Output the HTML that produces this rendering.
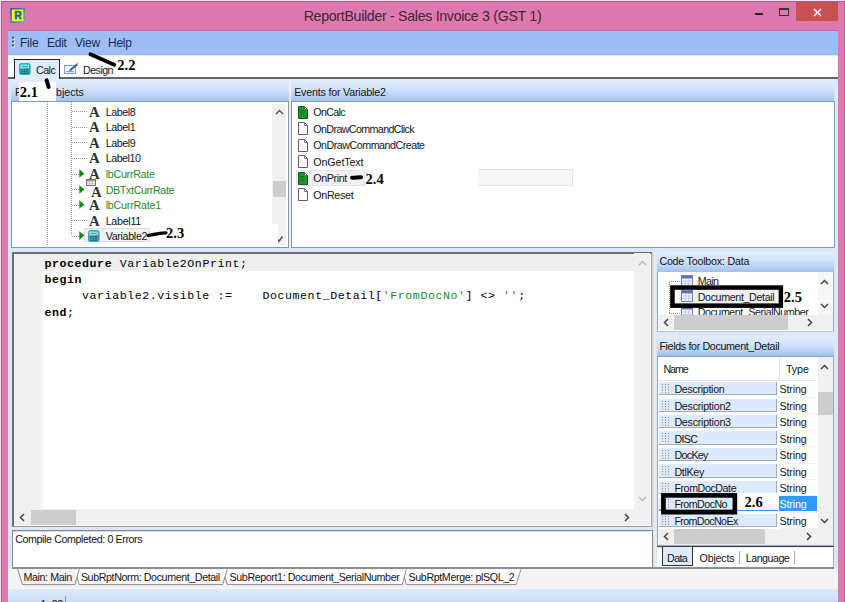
<!DOCTYPE html>
<html><head><meta charset="utf-8">
<style>
html,body{margin:0;padding:0;}
body{width:845px;height:602px;overflow:hidden;position:relative;background:#dd79ad;font-family:"Liberation Sans",sans-serif;font-size:10.7px;letter-spacing:-0.25px;color:#151515;}
.a{position:absolute;}
.t{position:absolute;white-space:nowrap;line-height:14px;}
.hdr{position:absolute;background:linear-gradient(#e2edfd 0%,#d0e1f9 45%,#b6cff3 78%,#a0bfee 100%);}
.code{font-family:"Liberation Mono",monospace;font-size:11.6px;letter-spacing:0.56px;white-space:pre;line-height:16.35px;color:#000;}.code b{font-weight:bold}
.g{color:#1d8a2b;}
.ann{font-family:"Liberation Serif",serif;font-weight:bold;font-size:14.5px;letter-spacing:0;color:#000;position:absolute;line-height:16px;white-space:nowrap;}
.sb{position:absolute;background:#f0f0f0;}
.th{position:absolute;background:#cdcdcd;}
.arr{position:absolute;}
.dv{position:absolute;width:1px;background:repeating-linear-gradient(#9c9c9c 0 1px,transparent 1px 2px);}
.dh{position:absolute;height:1px;background:repeating-linear-gradient(90deg,#9c9c9c 0 1px,transparent 1px 2px);}
.A{position:absolute;font-family:"Liberation Serif",serif;font-weight:bold;font-size:14.8px;letter-spacing:0;line-height:14px;color:#333;}
</style></head><body>
<!-- outer strips -->
<div class="a" style="left:0;top:0;width:845px;height:1.2px;background:#ece9ea"></div>
<div class="a" style="left:0;top:0;width:1.2px;height:602px;background:#e6e6e8"></div>
<div class="a" style="left:1.2px;top:1.2px;width:844px;height:1px;background:#b9588c"></div>
<div class="a" style="left:1.2px;top:1.2px;width:1px;height:601px;background:#b9588c"></div>

<div class="a" style="left:844px;top:1px;width:1px;height:601px;background:#b0608f"></div>
<!-- title bar -->
<svg class="a" style="left:10px;top:8px" width="16" height="16"><defs><linearGradient id="ig" x1="0" y1="0" x2="1" y2="1"><stop offset="0" stop-color="#34589f"/><stop offset="1" stop-color="#74a6d6"/></linearGradient></defs><rect x="0.3" y="0" width="14.7" height="15" fill="url(#ig)"/><rect x="1.9" y="1.6" width="11.4" height="11.6" fill="#ffff00"/><text x="7.8" y="11.2" text-anchor="middle" font-family="Liberation Sans,sans-serif" font-weight="bold" font-size="10.5" fill="#0a5fae" stroke="#0a5fae" stroke-width="0.5">R</text></svg>
<div class="t" style="left:0;width:845px;top:7px;text-align:center;font-size:14.2px;letter-spacing:-0.31px;line-height:18px;color:#43253a;">ReportBuilder - Sales Invoice 3 (GST 1)</div>
<div class="a" style="left:755px;top:13px;width:8px;height:2px;background:#222"></div>
<div class="a" style="left:779px;top:8px;width:8px;height:5px;border:1px solid #333;border-top-width:2px"></div>
<div class="a" style="left:796px;top:2px;width:42px;height:19px;background:#c75050"></div>
<svg class="a" style="left:813px;top:8px" width="9" height="9"><path d="M1 1L8 8M8 1L1 8" stroke="#fff" stroke-width="1.7"/></svg>

<!-- window client -->
<div class="a" style="left:8px;top:31px;width:830px;height:571px;background:#dce8fa"></div>
<!-- menubar -->
<div class="a" style="left:8px;top:30px;width:830px;height:1px;background:#c46a9c"></div><div class="a" style="left:8px;top:31px;width:830px;height:24px;background:#9fbdf5"></div>
<svg class="a" style="left:11px;top:36px" width="6" height="13"><g fill="#f2f6ff"><rect x="2" y="1.9" width="1.8" height="1.7"/><rect x="2" y="5.7" width="1.8" height="1.7"/><rect x="2" y="9.5" width="1.8" height="1.7"/></g><g fill="#2a3f7a"><rect x="1.1" y="0.9" width="1.9" height="1.7"/><rect x="1.1" y="4.7" width="1.9" height="1.7"/><rect x="1.1" y="8.5" width="1.9" height="1.7"/></g></svg>
<div class="t" style="left:20px;top:36px;font-size:12px;color:#1a2b50">File</div>
<div class="t" style="left:47px;top:36px;font-size:12px;color:#1a2b50">Edit</div>
<div class="t" style="left:75px;top:36px;font-size:12px;color:#1a2b50">View</div>
<div class="t" style="left:108px;top:36px;font-size:12px;color:#1a2b50">Help</div>
<!-- tab bar -->
<div class="a" style="left:8px;top:55px;width:830px;height:22px;background:linear-gradient(#d4d8e0 0,#fff 1.5px)"></div>
<div class="a" style="left:8px;top:77px;width:830px;height:1.5px;background:#62666c"></div>
<div class="a" style="left:14px;top:59px;width:44px;height:20px;border:1px solid #222;border-bottom:none;background:#e0ebfc"></div>
<svg class="a" style="left:19.2px;top:63.2px" width="12" height="12" viewBox="0 0 12 12"><defs><linearGradient id="cg" x1="0" y1="0" x2="1" y2="1"><stop offset="0" stop-color="#3fd0cc"/><stop offset="1" stop-color="#1299ad"/></linearGradient></defs><rect x="0.5" y="0.5" width="10.6" height="11" rx="1.6" fill="url(#cg)" stroke="#18a7b3" stroke-width="0.8"/><rect x="2" y="2.2" width="7.4" height="2.6" fill="#2fb3bd" stroke="#dff8fa" stroke-width="0.7"/><g fill="#2b5566"><rect x="2.1" y="6.1" width="1.4" height="1.3"/><rect x="4.6" y="6.1" width="1.4" height="1.3"/><rect x="2.1" y="8.1" width="1.4" height="1.3"/><rect x="4.6" y="8.1" width="1.4" height="1.3"/><rect x="7.1" y="8.1" width="1.4" height="1.3"/><rect x="2.1" y="10" width="1.4" height="1"/><rect x="4.6" y="10" width="1.4" height="1"/><rect x="7.1" y="10" width="1.4" height="1"/></g><rect x="7" y="5.8" width="2" height="1.8" fill="#f0151d"/></svg><div class="t" style="left:36px;top:62.5px;letter-spacing:-0.53px">Calc</div>
<svg class="a" style="left:64px;top:62px" width="16" height="13" viewBox="0 0 16 13"><rect x="0.5" y="3.5" width="11" height="8" fill="#f4f8ff" stroke="#7f9bd0"/><rect x="2" y="9" width="8" height="1.2" fill="#8fa8dc"/><path d="M5 9.5L6 7L12.5 1.5L14 3L7.5 8.6Z" fill="#3d5fae"/><path d="M12 1.2L13.4 0.3L14.8 1.8L14 3Z" fill="#e7b53a"/></svg>
<div class="t" style="left:83px;top:62.5px;letter-spacing:-0.54px">Design</div>

<!-- top-left panel -->
<div class="hdr" style="left:11px;top:79px;width:278px;height:22.6px"></div>
<div class="a" style="left:11px;top:101px;width:276px;height:145px;background:#fff;border:1px solid #8a95a5;border-top-color:#7f9dcb"></div>
<div class="t" style="left:15px;top:85px;">F</div>
<div class="t" style="left:56px;top:85px;letter-spacing:-0.04px">bjects</div>
<div class="a" style="left:19px;top:82px;width:37px;height:19px;background:#fff"></div>
<div class="dv" style="left:47px;top:102px;height:144px"></div><div class="dv" style="left:70.5px;top:102px;height:134px"></div><div class="dh" style="left:72px;top:111px;width:15px"></div><div class="A" style="left:89px;top:104.7px">A</div><div class="t" style="left:105.7px;top:104.7px;letter-spacing:-0.44px">Label8</div><div class="dh" style="left:72px;top:127px;width:15px"></div><div class="A" style="left:89px;top:120.2px">A</div><div class="t" style="left:105.7px;top:120.2px;letter-spacing:-0.44px">Label1</div><div class="dh" style="left:72px;top:142px;width:15px"></div><div class="A" style="left:89px;top:135.8px">A</div><div class="t" style="left:105.7px;top:135.8px;letter-spacing:-0.44px">Label9</div><div class="dh" style="left:72px;top:158px;width:15px"></div><div class="A" style="left:89px;top:151.3px">A</div><div class="t" style="left:105.7px;top:151.3px;letter-spacing:-0.47px">Label10</div><div class="dh" style="left:72px;top:174px;width:8px"></div><svg class="a" style="left:79px;top:169.0px" width="6" height="9"><path d="M0.3 0.3L5.5 4.5L0.3 8.7Z" fill="#128a12"/></svg><div class="A" style="left:89px;top:166.9px">A</div><div class="t g" style="left:105.7px;top:166.9px;letter-spacing:-0.27px">lbCurrRate</div><div class="dh" style="left:72px;top:189px;width:8px"></div><svg class="a" style="left:79px;top:184.6px" width="6" height="9"><path d="M0.3 0.3L5.5 4.5L0.3 8.7Z" fill="#128a12"/></svg><div class="A" style="left:91px;top:184.6px">A</div><svg class="a" style="left:86px;top:179.1px" width="10" height="8"><rect x="0.5" y="0.5" width="9" height="6" fill="#f4f4f4" stroke="#777"/><rect x="1" y="1" width="8" height="1.5" fill="#999"/><path d="M3.5 3V6.5M6.5 3V6.5M1 4.7H9" stroke="#aaa" stroke-width="0.7"/></svg><div class="t g" style="left:105.7px;top:182.5px;letter-spacing:-0.35px">DBTxtCurrRate</div><div class="dh" style="left:72px;top:205px;width:8px"></div><svg class="a" style="left:79px;top:200.1px" width="6" height="9"><path d="M0.3 0.3L5.5 4.5L0.3 8.7Z" fill="#128a12"/></svg><div class="A" style="left:89px;top:198.0px">A</div><div class="t g" style="left:105.7px;top:198.0px;letter-spacing:-0.21px">lbCurrRate1</div><div class="dh" style="left:72px;top:220px;width:15px"></div><div class="A" style="left:89px;top:213.6px">A</div><div class="t" style="left:105.7px;top:213.6px;letter-spacing:-0.28px">Label11</div><div class="dh" style="left:72px;top:236px;width:8px"></div><svg class="a" style="left:79px;top:231.2px" width="6" height="9"><path d="M0.3 0.3L5.5 4.5L0.3 8.7Z" fill="#128a12"/></svg><div class="a" style="left:84px;top:228.2px;width:66px;height:14px;background:#f1f1f1;border:1px solid #dcdcdc;box-sizing:border-box"></div><svg class="a" style="left:88px;top:230px" width="12" height="12" viewBox="0 0 12 12"><defs><linearGradient id="cg" x1="0" y1="0" x2="1" y2="1"><stop offset="0" stop-color="#3fd0cc"/><stop offset="1" stop-color="#1299ad"/></linearGradient></defs><rect x="0.5" y="0.5" width="10.6" height="11" rx="1.6" fill="url(#cg)" stroke="#18a7b3" stroke-width="0.8"/><rect x="2" y="2.2" width="7.4" height="2.6" fill="#2fb3bd" stroke="#dff8fa" stroke-width="0.7"/><g fill="#2b5566"><rect x="2.1" y="6.1" width="1.4" height="1.3"/><rect x="4.6" y="6.1" width="1.4" height="1.3"/><rect x="2.1" y="8.1" width="1.4" height="1.3"/><rect x="4.6" y="8.1" width="1.4" height="1.3"/><rect x="7.1" y="8.1" width="1.4" height="1.3"/><rect x="2.1" y="10" width="1.4" height="1"/><rect x="4.6" y="10" width="1.4" height="1"/><rect x="7.1" y="10" width="1.4" height="1"/></g><rect x="7" y="5.8" width="2" height="1.8" fill="#f0151d"/></svg><div class="t" style="left:105.7px;top:229.1px;letter-spacing:-0.32px">Variable2</div><div class="sb" style="left:272.3px;top:104px;width:14.2px;height:141px"></div>
<div class="th" style="left:272.8px;top:181px;width:13.2px;height:16.4px"></div>
<svg class="arr" style="left:275px;top:109px" width="9" height="6"><path d="M1 5L4.5 1.5L8 5" fill="none" stroke="#555" stroke-width="1.5"/></svg>
<svg class="arr" style="left:276px;top:234.5px" width="8" height="8"><path d="M1.2 4.2L3 6.3L6.5 1.5" fill="none" stroke="#555" stroke-width="1.6"/></svg>
<div class="a" style="left:272px;top:224px;width:5.6px;height:22px;background:#fff"></div>
<svg class="a" style="left:145px;top:228px" width="24" height="12"><path d="M3 7.5C8 7 14 4.5 21 4.8" fill="none" stroke="#000" stroke-width="3.2" stroke-linecap="round"/></svg>
<div class="ann" style="left:166px;top:224.5px">2.3</div>
<div class="a" style="left:289px;top:81px;width:2px;height:166px;background:#eceef4"></div><div class="hdr" style="left:291px;top:79px;width:543.2px;height:22.6px"></div>
<div class="a" style="left:291px;top:101px;width:541.5px;height:145px;background:#fff;border:1px solid #8a95a5;border-top-color:#7f9dcb"></div>
<div class="t" style="left:294.2px;top:85px;letter-spacing:-0.20px">Events for Variable2</div>
<svg class="a" style="left:298px;top:105.8px" width="10" height="13" viewBox="0 0 10 13"><path d="M0.5 0.5H6.5L9.5 3.5V12.5H0.5Z" fill="#119a2a" stroke="#2d4a2d"/><path d="M6.5 0.5V3.5H9.5Z" fill="#e8f4e8" stroke="#2d4a2d" stroke-width="0.6"/><path d="M2.5 4.5H6M2.5 6.5H5M2.5 8.5H6" stroke="#0a6a1a" stroke-width="0.9"/></svg><div class="t" style="left:313.3px;top:105.0px;letter-spacing:-0.67px">OnCalc</div><svg class="a" style="left:298px;top:122.3px" width="10" height="13" viewBox="0 0 10 13"><path d="M0.5 0.5H6.5L9.5 3.5V12.5H0.5Z" fill="#fff" stroke="#5a5a8a"/><path d="M6.5 0.5V3.5H9.5" fill="none" stroke="#5a5a8a" stroke-width="0.8"/></svg><div class="t" style="left:313.3px;top:121.5px;letter-spacing:-0.61px">OnDrawCommandClick</div><svg class="a" style="left:298px;top:138.8px" width="10" height="13" viewBox="0 0 10 13"><path d="M0.5 0.5H6.5L9.5 3.5V12.5H0.5Z" fill="#fff" stroke="#5a5a8a"/><path d="M6.5 0.5V3.5H9.5" fill="none" stroke="#5a5a8a" stroke-width="0.8"/></svg><div class="t" style="left:313.3px;top:138.0px;letter-spacing:-0.49px">OnDrawCommandCreate</div><svg class="a" style="left:298px;top:155.3px" width="10" height="13" viewBox="0 0 10 13"><path d="M0.5 0.5H6.5L9.5 3.5V12.5H0.5Z" fill="#fff" stroke="#5a5a8a"/><path d="M6.5 0.5V3.5H9.5" fill="none" stroke="#5a5a8a" stroke-width="0.8"/></svg><div class="t" style="left:313.3px;top:154.5px;letter-spacing:-0.10px">OnGetText</div><div class="a" style="left:296px;top:170.3px;width:69px;height:16px;background:#f1f1f1;border:1px solid #e3e3e3;box-sizing:border-box"></div><div class="a" style="left:478px;top:169.3px;width:95px;height:17px;background:#f7f7f7;border:1px solid #e3e3e3;border-left:none;box-sizing:border-box"></div><svg class="a" style="left:298px;top:171.8px" width="10" height="13" viewBox="0 0 10 13"><path d="M0.5 0.5H6.5L9.5 3.5V12.5H0.5Z" fill="#119a2a" stroke="#2d4a2d"/><path d="M6.5 0.5V3.5H9.5Z" fill="#e8f4e8" stroke="#2d4a2d" stroke-width="0.6"/><path d="M2.5 4.5H6M2.5 6.5H5M2.5 8.5H6" stroke="#0a6a1a" stroke-width="0.9"/></svg><div class="t" style="left:313.3px;top:171.0px;letter-spacing:-0.37px">OnPrint</div><svg class="a" style="left:298px;top:188.3px" width="10" height="13" viewBox="0 0 10 13"><path d="M0.5 0.5H6.5L9.5 3.5V12.5H0.5Z" fill="#fff" stroke="#5a5a8a"/><path d="M6.5 0.5V3.5H9.5" fill="none" stroke="#5a5a8a" stroke-width="0.8"/></svg><div class="t" style="left:313.3px;top:187.5px;letter-spacing:-0.31px">OnReset</div><svg class="a" style="left:348px;top:172px" width="18" height="10"><path d="M4 5.7C7 5.9 10 5 13 5.2" fill="none" stroke="#000" stroke-width="4" stroke-linecap="round"/></svg>
<div class="ann" style="left:365.6px;top:170.8px">2.4</div>
<div class="a" style="left:12px;top:252px;width:637px;height:272px;background:#fff;border:2px solid #6e6e6e;border-right:1px solid #a8a8a8;border-bottom:1.5px solid #9a9a9a"></div>
<div class="a" style="left:14px;top:254px;width:620px;height:17px;background:#efefef"></div>
<div class="a" style="left:14px;top:254px;width:27px;height:255px;background:#f0f0f0"></div><div class="a" style="left:41px;top:271px;width:1.5px;height:238px;background:#f7f7f7"></div>
<div class="code a" style="left:44.5px;top:255.7px;"><b>procedure</b> Variable2OnPrint;
<b>begin</b>
     variable2.visible :=    Document_Detail[<span class="g">'FromDocNo'</span>] &lt;&gt; <span class="g">''</span>;
<b>end</b>;</div>
<div class="sb" style="left:634px;top:253px;width:16px;height:256px"></div>
<svg class="arr" style="left:638px;top:260px" width="9" height="6"><path d="M1 5L4.5 1.5L8 5" fill="none" stroke="#bbb" stroke-width="1.5"/></svg>
<svg class="arr" style="left:638px;top:496px" width="9" height="6"><path d="M1 1L4.5 4.5L8 1" fill="none" stroke="#bbb" stroke-width="1.5"/></svg>
<div class="sb" style="left:14px;top:509px;width:636px;height:16px"></div>
<div class="th" style="left:31px;top:510px;width:45px;height:15px"></div>
<svg class="arr" style="left:19px;top:513px" width="6" height="9"><path d="M5 1L1.5 4.5L5 8" fill="none" stroke="#444" stroke-width="1.5"/></svg>
<svg class="arr" style="left:624px;top:513px" width="6" height="9"><path d="M1 1L4.5 4.5L1 8" fill="none" stroke="#444" stroke-width="1.5"/></svg>
<div class="a" style="left:651.5px;top:252px;width:3px;height:316px;background:linear-gradient(90deg,#c9c9c9,#f4f4f4)"></div>
<div class="hdr" style="left:656.5px;top:252px;width:177.7px;height:19.5px"></div>
<div class="t" style="left:659.4px;top:254.2px;letter-spacing:-0.22px">Code Toolbox: Data</div>
<div class="a" style="left:656.5px;top:271.5px;width:175.7px;height:59.5px;background:#fff;border:1px solid #a3aab6;border-top:none;border-bottom-color:#c0c4cc"></div>
<div class="a" style="left:817.6px;top:272px;width:15.5px;height:43px;background:#f6f6f6"></div>
<div class="sb" style="left:657.5px;top:315px;width:175.7px;height:14.7px"></div>
<div class="th" style="left:674.3px;top:315px;width:113.5px;height:14.7px"></div>
<svg class="arr" style="left:662.5px;top:318px" width="6" height="9"><path d="M5 1L1.5 4.5L5 8" fill="none" stroke="#444" stroke-width="1.5"/></svg>
<svg class="arr" style="left:806.5px;top:318px" width="6" height="9"><path d="M1 1L4.5 4.5L1 8" fill="none" stroke="#444" stroke-width="1.5"/></svg>
<svg class="arr" style="left:820px;top:279px" width="9" height="6"><path d="M1 5L4.5 1.5L8 5" fill="none" stroke="#444" stroke-width="1.5"/></svg>
<svg class="arr" style="left:820px;top:303px" width="9" height="6"><path d="M1 1L4.5 4.5L8 1" fill="none" stroke="#444" stroke-width="1.5"/></svg>
<div class="dv" style="left:668.5px;top:282px;height:31px"></div>
<div class="dh" style="left:669px;top:281px;width:12px"></div>
<div class="dh" style="left:669px;top:312.5px;width:12px"></div>
<svg class="a" style="left:680.8px;top:274.5px" width="12" height="12" viewBox="0 0 12 12"><rect x="0.5" y="0.5" width="11" height="11" fill="#fbfcff" stroke="#6f7fc0"/><rect x="1" y="1" width="10" height="2.5" fill="#5a6fc4"/><path d="M1 6H11M1 8.5H11M4.3 3.5V11M7.7 3.5V11" stroke="#b9c0dc" stroke-width="0.8"/></svg><div class="t" style="left:697.7px;top:273.7px;letter-spacing:-0.62px">Main</div><div class="a" style="left:679px;top:289.5px;width:97px;height:14px;background:#f0f0f0"></div><svg class="a" style="left:680.8px;top:290.3px" width="12" height="12" viewBox="0 0 12 12"><rect x="0.5" y="0.5" width="11" height="11" fill="#fbfcff" stroke="#6f7fc0"/><rect x="1" y="1" width="10" height="2.5" fill="#5a6fc4"/><path d="M1 6H11M1 8.5H11M4.3 3.5V11M7.7 3.5V11" stroke="#b9c0dc" stroke-width="0.8"/></svg><div class="t" style="left:697.7px;top:289.5px;letter-spacing:-0.36px">Document_Detail</div><div class="a" style="left:657.5px;top:303px;width:160px;height:12px;overflow:hidden"><svg class="a" style="left:23.3px;top:3.2px" width="12" height="12" viewBox="0 0 12 12"><rect x="0.5" y="0.5" width="11" height="11" fill="#fbfcff" stroke="#6f7fc0"/><rect x="1" y="1" width="10" height="2.5" fill="#5a6fc4"/><path d="M1 6H11M1 8.5H11M4.3 3.5V11M7.7 3.5V11" stroke="#b9c0dc" stroke-width="0.8"/></svg><div class="t" style="left:40.2px;top:1.7px;letter-spacing:-0.44px">Document_SerialNumber</div></div><svg class="a" style="left:660px;top:280px" width="130" height="32"><rect x="12.45" y="7.55" width="108.4" height="18.1" fill="none" stroke="#000" stroke-width="4.5"/></svg><div class="ann" style="left:783.8px;top:289.2px">2.5</div><div class="hdr" style="left:656.5px;top:335.6px;width:177.7px;height:20.6px"></div>
<div class="a" style="left:656.5px;top:355.6px;width:177.7px;height:1px;background:#86a5d6"></div>
<div class="t" style="left:659.4px;top:339.2px;letter-spacing:-0.35px">Fields for Document_Detail</div>
<div class="a" style="left:656.5px;top:356.6px;width:175.7px;height:188.4px;background:#fff;border:1px solid #a3aab6;border-top:none"></div>
<div class="a" style="left:658px;top:380px;width:159px;height:1px;background:#e3e8f0"></div>
<div class="a" style="left:779px;top:358px;width:1px;height:22px;background:#e3e8f0"></div>
<div class="t" style="left:663.5px;top:362.3px;letter-spacing:-1.11px">Name</div>
<div class="t" style="left:786px;top:362.3px;letter-spacing:-0.09px">Type</div>
<div class="sb" style="left:817.6px;top:357px;width:15.5px;height:172px"></div>
<div class="th" style="left:818px;top:392px;width:14.5px;height:23px"></div>
<svg class="arr" style="left:820px;top:364px" width="9" height="6"><path d="M1 5L4.5 1.5L8 5" fill="none" stroke="#444" stroke-width="1.5"/></svg>
<svg class="arr" style="left:820px;top:518px" width="9" height="6"><path d="M1 1L4.5 4.5L8 1" fill="none" stroke="#444" stroke-width="1.5"/></svg>
<div class="sb" style="left:657.5px;top:528.8px;width:175.7px;height:16.5px"></div>
<div class="th" style="left:674.2px;top:528.8px;width:90.7px;height:15px"></div>
<svg class="arr" style="left:662.5px;top:531.7px" width="6" height="9"><path d="M5 1L1.5 4.5L5 8" fill="none" stroke="#444" stroke-width="1.5"/></svg>
<svg class="arr" style="left:806.3px;top:531.7px" width="6" height="9"><path d="M1 1L4.5 4.5L1 8" fill="none" stroke="#444" stroke-width="1.5"/></svg>
<div class="a" style="left:659.2px;top:382.1px;width:118px;height:13.4px;background:#ddeafc;border-right:1px solid #9ea9ba;border-bottom:1px solid #9ea9ba;box-sizing:border-box"><svg class="a" style="left:3px;top:2px" width="8" height="9"><g fill="#7d8794"><rect x="0" y="0" width="1" height="1"/><rect x="3" y="0" width="1" height="1"/><rect x="6" y="0" width="1" height="1"/><rect x="0" y="2.6" width="1" height="1"/><rect x="3" y="2.6" width="1" height="1"/><rect x="6" y="2.6" width="1" height="1"/><rect x="0" y="5.2" width="1" height="1"/><rect x="3" y="5.2" width="1" height="1"/><rect x="6" y="5.2" width="1" height="1"/><rect x="0" y="7.8" width="1" height="1"/><rect x="3" y="7.8" width="1" height="1"/><rect x="6" y="7.8" width="1" height="1"/></g></svg></div><div class="t" style="left:674.4px;top:382.4px;letter-spacing:-0.31px">Description</div><div class="t" style="left:779.6px;top:382.4px;letter-spacing:-0.16px">String</div><div class="a" style="left:779px;top:396.9px;width:38px;height:1px;background:#eef1f6"></div><div class="a" style="left:659.2px;top:398.5px;width:118px;height:13.4px;background:#ddeafc;border-right:1px solid #9ea9ba;border-bottom:1px solid #9ea9ba;box-sizing:border-box"><svg class="a" style="left:3px;top:2px" width="8" height="9"><g fill="#7d8794"><rect x="0" y="0" width="1" height="1"/><rect x="3" y="0" width="1" height="1"/><rect x="6" y="0" width="1" height="1"/><rect x="0" y="2.6" width="1" height="1"/><rect x="3" y="2.6" width="1" height="1"/><rect x="6" y="2.6" width="1" height="1"/><rect x="0" y="5.2" width="1" height="1"/><rect x="3" y="5.2" width="1" height="1"/><rect x="6" y="5.2" width="1" height="1"/><rect x="0" y="7.8" width="1" height="1"/><rect x="3" y="7.8" width="1" height="1"/><rect x="6" y="7.8" width="1" height="1"/></g></svg></div><div class="t" style="left:674.4px;top:398.8px;letter-spacing:-0.25px">Description2</div><div class="t" style="left:779.6px;top:398.8px;letter-spacing:-0.16px">String</div><div class="a" style="left:779px;top:413.3px;width:38px;height:1px;background:#eef1f6"></div><div class="a" style="left:659.2px;top:414.9px;width:118px;height:13.4px;background:#ddeafc;border-right:1px solid #9ea9ba;border-bottom:1px solid #9ea9ba;box-sizing:border-box"><svg class="a" style="left:3px;top:2px" width="8" height="9"><g fill="#7d8794"><rect x="0" y="0" width="1" height="1"/><rect x="3" y="0" width="1" height="1"/><rect x="6" y="0" width="1" height="1"/><rect x="0" y="2.6" width="1" height="1"/><rect x="3" y="2.6" width="1" height="1"/><rect x="6" y="2.6" width="1" height="1"/><rect x="0" y="5.2" width="1" height="1"/><rect x="3" y="5.2" width="1" height="1"/><rect x="6" y="5.2" width="1" height="1"/><rect x="0" y="7.8" width="1" height="1"/><rect x="3" y="7.8" width="1" height="1"/><rect x="6" y="7.8" width="1" height="1"/></g></svg></div><div class="t" style="left:674.4px;top:415.2px;letter-spacing:-0.25px">Description3</div><div class="t" style="left:779.6px;top:415.2px;letter-spacing:-0.16px">String</div><div class="a" style="left:779px;top:429.7px;width:38px;height:1px;background:#eef1f6"></div><div class="a" style="left:659.2px;top:431.4px;width:118px;height:13.4px;background:#ddeafc;border-right:1px solid #9ea9ba;border-bottom:1px solid #9ea9ba;box-sizing:border-box"><svg class="a" style="left:3px;top:2px" width="8" height="9"><g fill="#7d8794"><rect x="0" y="0" width="1" height="1"/><rect x="3" y="0" width="1" height="1"/><rect x="6" y="0" width="1" height="1"/><rect x="0" y="2.6" width="1" height="1"/><rect x="3" y="2.6" width="1" height="1"/><rect x="6" y="2.6" width="1" height="1"/><rect x="0" y="5.2" width="1" height="1"/><rect x="3" y="5.2" width="1" height="1"/><rect x="6" y="5.2" width="1" height="1"/><rect x="0" y="7.8" width="1" height="1"/><rect x="3" y="7.8" width="1" height="1"/><rect x="6" y="7.8" width="1" height="1"/></g></svg></div><div class="t" style="left:674.4px;top:431.7px;letter-spacing:-0.65px">DISC</div><div class="t" style="left:779.6px;top:431.7px;letter-spacing:-0.16px">String</div><div class="a" style="left:779px;top:446.2px;width:38px;height:1px;background:#eef1f6"></div><div class="a" style="left:659.2px;top:447.8px;width:118px;height:13.4px;background:#ddeafc;border-right:1px solid #9ea9ba;border-bottom:1px solid #9ea9ba;box-sizing:border-box"><svg class="a" style="left:3px;top:2px" width="8" height="9"><g fill="#7d8794"><rect x="0" y="0" width="1" height="1"/><rect x="3" y="0" width="1" height="1"/><rect x="6" y="0" width="1" height="1"/><rect x="0" y="2.6" width="1" height="1"/><rect x="3" y="2.6" width="1" height="1"/><rect x="6" y="2.6" width="1" height="1"/><rect x="0" y="5.2" width="1" height="1"/><rect x="3" y="5.2" width="1" height="1"/><rect x="6" y="5.2" width="1" height="1"/><rect x="0" y="7.8" width="1" height="1"/><rect x="3" y="7.8" width="1" height="1"/><rect x="6" y="7.8" width="1" height="1"/></g></svg></div><div class="t" style="left:674.4px;top:448.1px;letter-spacing:-0.67px">DocKey</div><div class="t" style="left:779.6px;top:448.1px;letter-spacing:-0.16px">String</div><div class="a" style="left:779px;top:462.6px;width:38px;height:1px;background:#eef1f6"></div><div class="a" style="left:659.2px;top:464.2px;width:118px;height:13.4px;background:#ddeafc;border-right:1px solid #9ea9ba;border-bottom:1px solid #9ea9ba;box-sizing:border-box"><svg class="a" style="left:3px;top:2px" width="8" height="9"><g fill="#7d8794"><rect x="0" y="0" width="1" height="1"/><rect x="3" y="0" width="1" height="1"/><rect x="6" y="0" width="1" height="1"/><rect x="0" y="2.6" width="1" height="1"/><rect x="3" y="2.6" width="1" height="1"/><rect x="6" y="2.6" width="1" height="1"/><rect x="0" y="5.2" width="1" height="1"/><rect x="3" y="5.2" width="1" height="1"/><rect x="6" y="5.2" width="1" height="1"/><rect x="0" y="7.8" width="1" height="1"/><rect x="3" y="7.8" width="1" height="1"/><rect x="6" y="7.8" width="1" height="1"/></g></svg></div><div class="t" style="left:674.4px;top:464.5px;letter-spacing:-0.32px">DtlKey</div><div class="t" style="left:779.6px;top:464.5px;letter-spacing:-0.16px">String</div><div class="a" style="left:779px;top:479.0px;width:38px;height:1px;background:#eef1f6"></div><div class="a" style="left:659.2px;top:480.6px;width:118px;height:13.4px;background:#ddeafc;border-right:1px solid #9ea9ba;border-bottom:1px solid #9ea9ba;box-sizing:border-box"><svg class="a" style="left:3px;top:2px" width="8" height="9"><g fill="#7d8794"><rect x="0" y="0" width="1" height="1"/><rect x="3" y="0" width="1" height="1"/><rect x="6" y="0" width="1" height="1"/><rect x="0" y="2.6" width="1" height="1"/><rect x="3" y="2.6" width="1" height="1"/><rect x="6" y="2.6" width="1" height="1"/><rect x="0" y="5.2" width="1" height="1"/><rect x="3" y="5.2" width="1" height="1"/><rect x="6" y="5.2" width="1" height="1"/><rect x="0" y="7.8" width="1" height="1"/><rect x="3" y="7.8" width="1" height="1"/><rect x="6" y="7.8" width="1" height="1"/></g></svg></div><div class="t" style="left:674.4px;top:480.9px;letter-spacing:-0.43px">FromDocDate</div><div class="t" style="left:779.6px;top:480.9px;letter-spacing:-0.16px">String</div><div class="a" style="left:779px;top:495.4px;width:38px;height:1px;background:#eef1f6"></div><div class="a" style="left:659.2px;top:497.0px;width:118px;height:13.4px;background:#ddeafc;border-right:1px solid #9ea9ba;border-bottom:1px solid #9ea9ba;box-sizing:border-box"><svg class="a" style="left:3px;top:2px" width="8" height="9"><g fill="#7d8794"><rect x="0" y="0" width="1" height="1"/><rect x="3" y="0" width="1" height="1"/><rect x="6" y="0" width="1" height="1"/><rect x="0" y="2.6" width="1" height="1"/><rect x="3" y="2.6" width="1" height="1"/><rect x="6" y="2.6" width="1" height="1"/><rect x="0" y="5.2" width="1" height="1"/><rect x="3" y="5.2" width="1" height="1"/><rect x="6" y="5.2" width="1" height="1"/><rect x="0" y="7.8" width="1" height="1"/><rect x="3" y="7.8" width="1" height="1"/><rect x="6" y="7.8" width="1" height="1"/></g></svg></div><div class="t" style="left:674.4px;top:497.3px;letter-spacing:-0.56px">FromDocNo</div><div class="a" style="left:778.8px;top:495.9px;width:37.8px;height:14.7px;background:#3399ff"></div><div class="t" style="left:779.6px;top:497.3px;color:#fff;letter-spacing:-0.16px">String</div><div class="a" style="left:779px;top:511.8px;width:38px;height:1px;background:#eef1f6"></div><div class="a" style="left:659.2px;top:513.5px;width:118px;height:13.4px;background:#ddeafc;border-right:1px solid #9ea9ba;border-bottom:1px solid #9ea9ba;box-sizing:border-box"><svg class="a" style="left:3px;top:2px" width="8" height="9"><g fill="#7d8794"><rect x="0" y="0" width="1" height="1"/><rect x="3" y="0" width="1" height="1"/><rect x="6" y="0" width="1" height="1"/><rect x="0" y="2.6" width="1" height="1"/><rect x="3" y="2.6" width="1" height="1"/><rect x="6" y="2.6" width="1" height="1"/><rect x="0" y="5.2" width="1" height="1"/><rect x="3" y="5.2" width="1" height="1"/><rect x="6" y="5.2" width="1" height="1"/><rect x="0" y="7.8" width="1" height="1"/><rect x="3" y="7.8" width="1" height="1"/><rect x="6" y="7.8" width="1" height="1"/></g></svg></div><div class="t" style="left:674.4px;top:513.8px;letter-spacing:-0.62px">FromDocNoEx</div><div class="t" style="left:779.6px;top:513.8px;letter-spacing:-0.16px">String</div><div class="a" style="left:779px;top:528.3px;width:38px;height:1px;background:#eef1f6"></div><div class="a" style="left:737.2px;top:493.1px;width:40.8px;height:17px;background:#fff;border-bottom:1px solid #3c8ee6"></div>
<div class="a" style="left:658.8px;top:510.2px;width:119px;height:1px;background:#3c8ee6"></div>
<svg class="a" style="left:655px;top:488px" width="90" height="32"><rect x="8.4" y="7.4" width="71.5" height="16.8" fill="none" stroke="#000" stroke-width="4.6"/></svg>
<div class="ann" style="left:744.6px;top:493.9px">2.6</div>
<div class="a" style="left:656.5px;top:546.2px;width:177.7px;height:1.3px;background:#444"></div>
<div class="a" style="left:656.5px;top:547.5px;width:176.7px;height:21.5px;background:#fff;border-right:1px solid #a3aab6"></div>
<div class="a" style="left:662px;top:546.5px;width:31.4px;height:19px;background:#dfeafb;border:1px solid #333;border-top:none;box-sizing:border-box"></div>
<div class="t" style="left:667px;top:550.5px;letter-spacing:-0.59px">Data</div>
<div class="t" style="left:699.6px;top:550.5px;letter-spacing:-0.21px">Objects</div>
<div class="a" style="left:739.2px;top:551px;width:1px;height:13px;background:#aaa"></div>
<div class="t" style="left:745.8px;top:550.5px;letter-spacing:-0.51px">Language</div>
<div class="a" style="left:794.4px;top:551px;width:1px;height:13px;background:#aaa"></div>
<div class="a" style="left:12px;top:530px;width:638.5px;height:37px;background:#fff;border:1px solid #8a8a8a"></div>
<div class="a" style="left:13px;top:531px;width:636.5px;height:1px;background:#d8d8d8"></div>
<div class="t" style="left:15.2px;top:531.8px;letter-spacing:-0.40px">Compile Completed: 0 Errors</div>
<div class="a" style="left:8px;top:569px;width:830px;height:20px;background:#f3f3f3"></div>
<div class="a" style="left:11.5px;top:567.3px;width:822.5px;height:2.2px;background:#8d8d93"></div>
<svg class="a" style="left:8px;top:568px" width="530" height="20" viewBox="0 0 530 20"><path d="M394.2 1.3L398.4 16.6H508L513 1.3" fill="#fdfdfd" stroke="#8e8e8e" stroke-width="1"/><path d="M214.6 1.3L219.3 16.6H394.2L398.4 1.3" fill="#fdfdfd" stroke="#8e8e8e" stroke-width="1"/><path d="M66.9 1.3L71.2 16.6H214.6L219.3 1.3" fill="#fdfdfd" stroke="#8e8e8e" stroke-width="1"/><path d="M9.7 1.3L14.5 16.6H66.9L71.2 1.3" fill="#f3f3f3" stroke="#8e8e8e" stroke-width="1"/></svg>
<div class="t" style="left:23.6px;top:570.4px;letter-spacing:-0.42px">Main: Main</div>
<div class="t" style="left:80.9px;top:570.4px;letter-spacing:-0.40px">SubRptNorm: Document_Detail</div>
<div class="t" style="left:229.6px;top:570.4px;letter-spacing:-0.40px">SubReport1: Document_SerialNumber</div>
<div class="t" style="left:408.5px;top:570.4px;letter-spacing:-0.38px">SubRptMerge: plSQL_2</div>
<div class="a" style="left:8px;top:589px;width:830px;height:13px;background:linear-gradient(#dfebfc,#c9dcf9)"></div>
<div class="t" style="left:40.5px;top:596.7px">1: 22</div>
<div class="a" style="left:65px;top:596.3px;width:1px;height:6px;background:#8a9ab5"></div>
<svg class="a" style="left:84px;top:48px" width="40" height="24"><path d="M6.4 6.2L30.2 16.7" stroke="#000" stroke-width="3.8" stroke-linecap="round"/></svg>
<div class="ann" style="left:117.3px;top:57.2px">2.2</div>
<div class="ann" style="left:19.8px;top:84.1px">2.1</div>
<svg class="a" style="left:40px;top:74px" width="16" height="20"><path d="M6.6 6.3L8.6 13" stroke="#000" stroke-width="4" stroke-linecap="round"/></svg>
</body></html>
